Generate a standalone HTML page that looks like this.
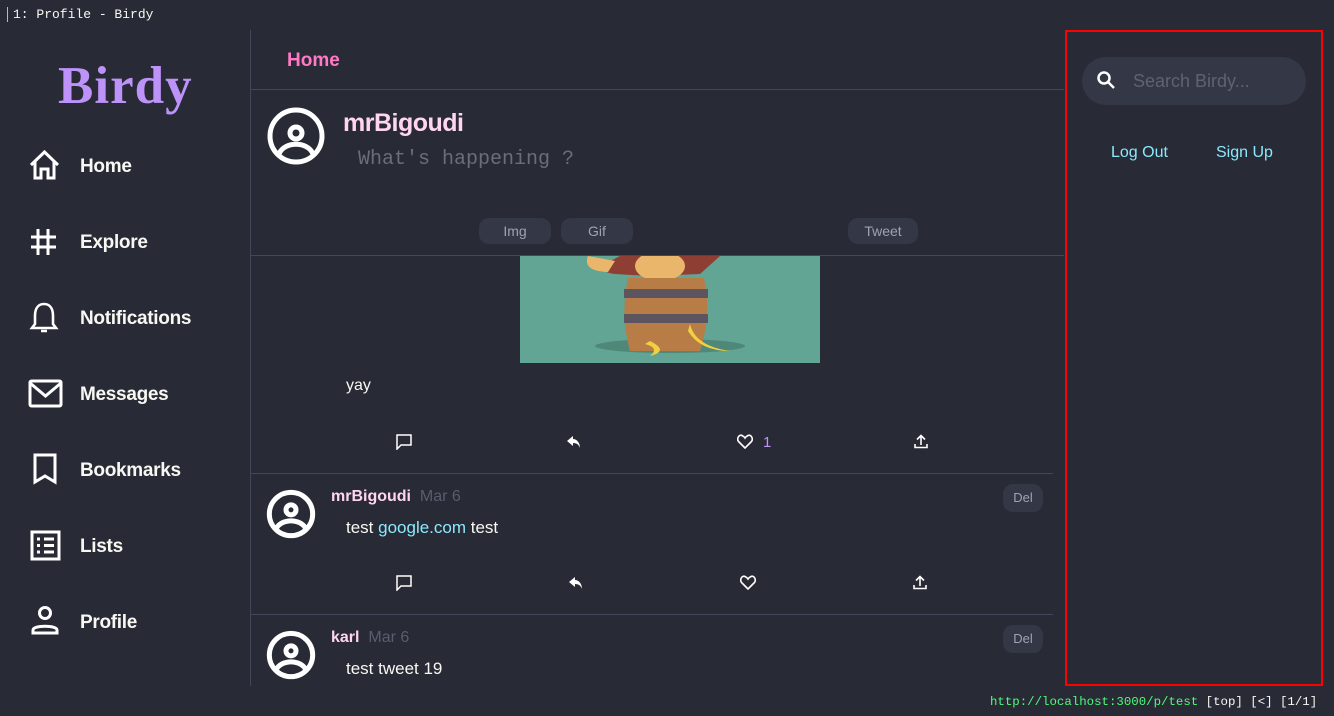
<!DOCTYPE html>
<html><head><meta charset="utf-8"><style>
*{margin:0;padding:0;box-sizing:border-box}
body{width:1334px;height:716px;background:#282a36;color:#f8f8f2;font-family:"Liberation Sans",sans-serif;position:relative;overflow:hidden}
.a{position:absolute}
.mono{font-family:"Liberation Mono","DejaVu Sans Mono",monospace}
.nav{position:absolute;left:80px;font-size:19px;font-weight:bold;color:#f8f8f2;letter-spacing:-0.3px}
.ic{position:absolute;left:28px}
.hl{position:absolute;height:1px;background:#44475a}
.btn{position:absolute;height:26px;border-radius:10px;background:#343746;color:#a0a2b0;font-size:14px;text-align:center;line-height:26px}
.name{color:#ffd5f0;font-weight:bold;font-size:16px}
.date{color:#5a5d6e;font-size:16px}
svg{display:block}
</style></head><body>
<div class="a mono" style="left:7px;top:7px;font-size:13px;color:#f8f8f2;border-left:1px solid #50fa7b;padding-left:5px;line-height:15px">1: Profile - Birdy</div>

<div class="a" style="left:58px;top:56px;font-family:'Liberation Serif',serif;font-weight:bold;font-size:53px;color:#bd93f9;letter-spacing:1px">Birdy</div>

<div class="a" style="left:250px;top:30px;width:1px;height:656px;background:#44475a"></div>

<svg class="ic" style="top:149px" width="33" height="32" viewBox="0 0 33 32" fill="none" stroke="#fff" stroke-width="3"><path d="M3 16 L16.5 3 L30 16 M7 13 V29 H13 V20 H20 V29 H26 V13"/></svg>
<div class="nav" style="top:156px">Home</div>
<svg class="ic" style="top:228px" width="30" height="28" viewBox="0 0 30 28" stroke="#fff" stroke-width="3"><path d="M10 1V27M20 1V27M3 9H28M3 19H28"/></svg>
<div class="nav" style="top:232px">Explore</div>
<svg class="ic" style="top:300px" width="32" height="36" viewBox="0 0 32 36" fill="none" stroke="#fff" stroke-width="2.6"><path d="M16 4 C9 4 7 10 7 16 V24 L4 28 H28 L25 24 V16 C25 10 23 4 16 4Z M13 31 H19"/></svg>
<div class="nav" style="top:308px">Notifications</div>
<svg class="ic" style="top:379px" width="35" height="29" viewBox="0 0 35 29" fill="none" stroke="#fff" stroke-width="3"><rect x="2" y="2" width="31" height="25" rx="1.5"/><path d="M2 4 L17.5 17 L33 4"/></svg>
<div class="nav" style="top:384px">Messages</div>
<svg class="ic" style="top:453px;left:32px" width="26" height="32" viewBox="0 0 26 32" fill="none" stroke="#fff" stroke-width="3"><path d="M3 2H23V29L13 23L3 29Z"/></svg>
<div class="nav" style="top:460px">Bookmarks</div>
<svg class="ic" style="top:530px;left:30px" width="31" height="31" viewBox="0 0 31 31" fill="none" stroke="#fff" stroke-width="3"><rect x="2" y="2" width="27" height="27"/><path d="M7 9H10M14 9H24M7 15.5H10M14 15.5H24M7 22H10M14 22H24"/></svg>
<div class="nav" style="top:536px">Lists</div>
<svg class="ic" style="top:604px;left:30px" width="30" height="32" viewBox="0 0 30 32" fill="none" stroke="#fff" stroke-width="3"><circle cx="15" cy="9" r="5.5"/><path d="M3 29 V26 C3 21 27 21 27 26 V29 Z"/></svg>
<div class="nav" style="top:612px">Profile</div>

<div class="a" style="left:287px;top:50px;color:#ff79c6;font-size:19px;font-weight:bold">Home</div>
<div class="hl" style="left:251px;top:89px;width:813px"></div>

<svg class="a" style="left:266px;top:106px" width="60" height="60" viewBox="0 0 60 60" fill="none" stroke="#fff" stroke-width="5"><circle cx="30" cy="30" r="26"/><circle cx="30" cy="27" r="6"/><path d="M13 48 C18 35 42 35 47 48"/></svg>
<div class="a" style="left:343px;top:109px;color:#ffd5f0;font-size:25px;font-weight:bold;letter-spacing:-0.5px">mrBigoudi</div>
<div class="a mono" style="left:358px;top:148px;color:#6b6d7a;font-size:20px">What's happening ?</div>
<div class="btn" style="left:479px;top:218px;width:72px">Img</div>
<div class="btn" style="left:561px;top:218px;width:72px">Gif</div>
<div class="btn" style="left:848px;top:218px;width:70px">Tweet</div>
<div class="hl" style="left:251px;top:255px;width:813px"></div>

<svg class="a" style="left:520px;top:256px" width="300" height="107" viewBox="0 0 300 107">
<rect width="300" height="107" fill="#62a594"/>
<ellipse cx="150" cy="90" rx="75" ry="7" fill="#4f8878"/>
<path d="M100 0 Q70 15 95 18 L130 20 L180 18 L200 0Z" fill="#8e3e32"/>
<path d="M68 0 Q62 15 88 16 L95 5Z" fill="#eab66b"/>
<ellipse cx="140" cy="10" rx="25" ry="15" fill="#eab66b"/>
<path d="M108 22 Q100 60 110 95 L180 95 Q192 60 184 22Z" fill="#b87c47"/>
<rect x="104" y="33" width="84" height="9" fill="#5c5560"/>
<rect x="104" y="58" width="84" height="9" fill="#5c5560"/>
<path d="M130 85 Q150 95 130 100 Q140 92 125 88Z" fill="#f0d042"/>
<path d="M170 68 Q175 90 210 95 Q180 95 168 75Z" fill="#f0d042"/>
</svg>
<div class="a" style="left:346px;top:377px;font-size:16px">yay</div>

<svg class="a" style="left:396px;top:434px" width="16" height="16" viewBox="0 0 16 16" fill="none" stroke="#fff" stroke-width="1.5"><path d="M1 1H15V11H5L1 15Z"/></svg>
<svg class="a" style="left:566px;top:434px" width="16" height="16" viewBox="0 0 16 16" fill="#fff"><path d="M7 2L1 7L7 12V9C11 9 13 11 14 14C14 9 11 5 7 5Z"/></svg>
<svg class="a" style="left:737px;top:434px" width="16" height="15" viewBox="0 0 16 15" fill="none" stroke="#fff" stroke-width="1.6"><path d="M8 14L2 8C-1 5 2 0 5 1.5 7 2.5 8 4 8 4 8 4 9 2.5 11 1.5 14 0 17 5 14 8Z"/></svg>
<div class="a" style="left:763px;top:434px;font-size:15px;color:#bd93f9">1</div>
<svg class="a" style="left:914px;top:434px" width="14" height="15" viewBox="0 0 14 15" fill="none" stroke="#fff" stroke-width="1.6"><path d="M7 11V2M3 5.5L7 1.5L11 5.5M1 10V13.5H13V10"/></svg>
<div class="hl" style="left:251px;top:473px;width:802px"></div>

<svg class="a" style="left:266px;top:489px" width="50" height="50" viewBox="0 0 60 60" fill="none" stroke="#fff" stroke-width="6"><circle cx="30" cy="30" r="26"/><circle cx="30" cy="25" r="6"/><path d="M12 48 C18 35 42 35 48 48"/></svg>
<div class="a" style="left:331px;top:488px"><span class="name">mrBigoudi</span> <span class="date">&nbsp;Mar 6</span></div>
<div class="btn" style="left:1003px;top:484px;width:40px;height:28px;line-height:28px;font-size:13px">Del</div>
<div class="a" style="left:346px;top:518px;font-size:17px">test <span style="color:#8be9fd">google.com</span> test</div>
<svg class="a" style="left:396px;top:575px" width="16" height="16" viewBox="0 0 16 16" fill="none" stroke="#fff" stroke-width="1.5"><path d="M1 1H15V11H5L1 15Z"/></svg>
<svg class="a" style="left:568px;top:575px" width="16" height="16" viewBox="0 0 16 16" fill="#fff"><path d="M7 2L1 7L7 12V9C11 9 13 11 14 14C14 9 11 5 7 5Z"/></svg>
<svg class="a" style="left:740px;top:575px" width="16" height="15" viewBox="0 0 16 15" fill="none" stroke="#fff" stroke-width="1.6"><path d="M8 14L2 8C-1 5 2 0 5 1.5 7 2.5 8 4 8 4 8 4 9 2.5 11 1.5 14 0 17 5 14 8Z"/></svg>
<svg class="a" style="left:913px;top:575px" width="14" height="15" viewBox="0 0 14 15" fill="none" stroke="#fff" stroke-width="1.6"><path d="M7 11V2M3 5.5L7 1.5L11 5.5M1 10V13.5H13V10"/></svg>
<div class="hl" style="left:251px;top:614px;width:802px"></div>

<svg class="a" style="left:266px;top:630px" width="50" height="50" viewBox="0 0 60 60" fill="none" stroke="#fff" stroke-width="6"><circle cx="30" cy="30" r="26"/><circle cx="30" cy="25" r="6"/><path d="M12 48 C18 35 42 35 48 48"/></svg>
<div class="a" style="left:331px;top:629px"><span class="name">karl</span> <span class="date">&nbsp;Mar 6</span></div>
<div class="btn" style="left:1003px;top:625px;width:40px;height:28px;line-height:28px;font-size:13px">Del</div>
<div class="a" style="left:346px;top:659px;font-size:17px">test tweet 19</div>

<div class="a" style="left:1065px;top:30px;width:258px;height:656px;border:2px solid #ff0000"></div>
<div class="a" style="left:1082px;top:57px;width:224px;height:48px;border-radius:24px;background:#343746"></div>
<svg class="a" style="left:1096px;top:70px" width="20" height="20" viewBox="0 0 20 20" fill="none" stroke="#fff" stroke-width="2.5"><circle cx="8" cy="8" r="5.5"/><path d="M12 12L18 18"/></svg>
<div class="a" style="left:1133px;top:71px;color:#5f6272;font-size:18px">Search Birdy...</div>
<div class="a" style="left:1111px;top:144px;color:#8be9fd;font-size:16px">Log Out</div>
<div class="a" style="left:1216px;top:144px;color:#8be9fd;font-size:16px">Sign Up</div>

<div class="a mono" style="left:990px;top:695px;font-size:12.4px;color:#50fa7b">http://localhost:3000/p/test <span style="color:#f8f8f2">[top] [&lt;] [1/1]</span></div>
</body></html>
